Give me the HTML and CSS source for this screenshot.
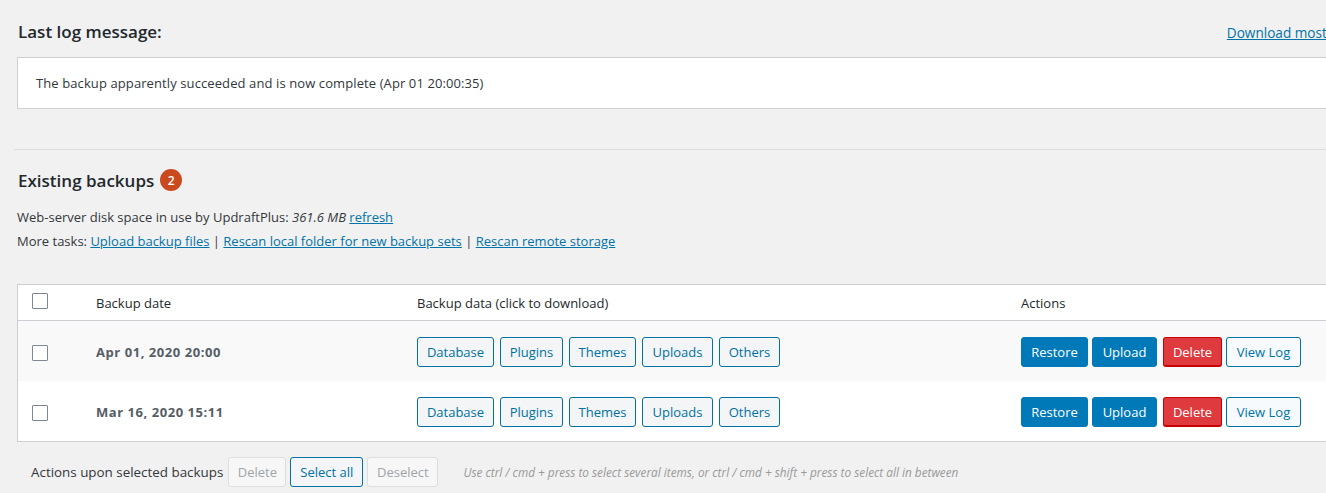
FILE: index.html
```html
<!DOCTYPE html>
<html>
<head>
<meta charset="utf-8">
<link rel="stylesheet" href="styles.css">
</head>
<body>
<div class="wrap">
  <div class="log-head">
    <h3 class="title">Last log message:</h3>
    <a class="link log-dl" href="#">Download most recent log file</a>
  </div>
  <div class="log-box">The backup apparently succeeded and is now complete (Apr 01 20:00:35)</div>
  <hr class="sep">
  <h3 class="title existing">Existing backups <span class="badge">2</span></h3>
  <p class="info first">Web-server disk space in use by UpdraftPlus: <em>361.6 MB</em> <a class="link" href="#">refresh</a></p>
  <p class="info">More tasks: <a class="link" href="#">Upload backup files</a> | <a class="link" href="#">Rescan local folder for new backup sets</a> | <a class="link" href="#">Rescan remote storage</a></p>

  <div class="table">
    <div class="row head">
      <div class="cell chk"><span class="box"></span></div>
      <div class="cell">Backup date</div>
      <div class="cell">Backup data (click to download)</div>
      <div class="cell">Actions</div>
    </div>
    <div class="row alt">
      <div class="cell chk"><span class="box"></span></div>
      <div class="cell date">Apr 01, 2020 20:00</div>
      <div class="cell data">
        <button class="btn w-db">Database</button><button class="btn w-pl">Plugins</button><button class="btn w-th">Themes</button><button class="btn w-up">Uploads</button><button class="btn w-ot">Others</button>
      </div>
      <div class="cell actions">
        <button class="btn primary w-re">Restore</button><button class="btn primary w-ul">Upload</button><button class="btn danger w-de">Delete</button><button class="btn light w-vl">View Log</button>
      </div>
    </div>
    <div class="row">
      <div class="cell chk"><span class="box"></span></div>
      <div class="cell date">Mar 16, 2020 15:11</div>
      <div class="cell data">
        <button class="btn w-db">Database</button><button class="btn w-pl">Plugins</button><button class="btn w-th">Themes</button><button class="btn w-up">Uploads</button><button class="btn w-ot">Others</button>
      </div>
      <div class="cell actions">
        <button class="btn primary w-re">Restore</button><button class="btn primary w-ul">Upload</button><button class="btn danger w-de">Delete</button><button class="btn light w-vl">View Log</button>
      </div>
    </div>
  </div>

  <div class="bulk">
    <span class="bulk-label">Actions upon selected backups</span>
    <button class="btn disabled w-bd">Delete</button>
    <button class="btn w-bs">Select all</button>
    <button class="btn disabled w-bx">Deselect</button>
    <span class="hint">Use ctrl / cmd + press to select several items, or ctrl / cmd + shift + press to select all in between</span>
  </div>
</div>
</body>
</html>
```

FILE: styles.css
```css
html, body {
  margin: 0;
  padding: 0;
}
body {
  background: #f1f1f1;
  color: #32373c;
  font-family: "Open Sans", "Noto Sans", sans-serif;
  font-size: 13px;
  overflow: hidden;
  width: 1326px;
  height: 493px;
}
.wrap {
  width: 1405px;
  padding: 0 0 0 17px;
}
.log-head {
  display: flex;
  justify-content: space-between;
  align-items: center;
  height: 57px;
  padding-top: 6px;
  box-sizing: border-box;
}
.title {
  margin: 0;
  font-size: 17px;
  font-weight: 600;
  color: #23282d;
  padding-left: 1px;
}
.log-dl {
  font-size: 13.6px;
  margin-top: 1px;
  margin-right: 6px;
}
.link {
  color: #0073aa;
  text-decoration: underline;
}
.log-box {
  background: #fff;
  border: 1px solid #ccd0d4;
  height: 50px;
  line-height: 50px;
  padding-left: 18px;
  font-size: 13px;
  letter-spacing: 0.1px;
}
.sep {
  border: 0;
  border-top: 1px solid #dcdcdc;
  margin: 40px 0 0 -3px;
  height: 0;
}
.existing {
  display: flex;
  align-items: center;
  margin-top: 18px;
  height: 24px;
}
.badge {
  display: inline-flex;
  align-items: center;
  justify-content: center;
  width: 22px;
  height: 22px;
  border-radius: 50%;
  background: #ca4a1f;
  color: #fff;
  font-size: 12px;
  font-weight: 600;
  margin-left: 6px;
}
.info {
  margin: 0;
  line-height: 24px;
  font-size: 13px;
}
.info.first {
  margin-top: 13px;
}
.table {
  margin-top: 31px;
  background: #fff;
  border: 1px solid #ccd0d4;
}
.row {
  display: grid;
  grid-template-columns: 68px 321px 604px 1fr;
  height: 60px;
  align-items: center;
  box-sizing: border-box;
  padding-top: 1px;
}
.row.head {
  height: 36px;
  padding-top: 0;
  border-bottom: 1px solid #ccd0d4;
  color: #23282d;
  font-size: 13px;
}
.row.alt {
  background: #f9f9f9;
}
.cell {
  padding-left: 10px;
  display: flex;
  align-items: center;
}
.cell.chk {
  padding-left: 14px;
}
.row .cell.chk .box {
  margin-top: 2px;
}
.row.head .cell.chk .box {
  margin-top: -3px;
}
.box {
  display: block;
  width: 14px;
  height: 14px;
  border: 1px solid #7e8993;
  background: #fff;
  border-radius: 1px;
}
.date {
  font-weight: 700;
  color: #555d66;
  font-size: 13px;
  letter-spacing: 0.55px;
}
.btn {
  font-family: inherit;
  font-size: 13px;
  height: 30px;
  line-height: 28px;
  padding: 0;
  border: 1px solid #0071a1;
  border-radius: 3px;
  background: #f3f5f6;
  color: #0071a1;
  margin: 0;
  box-sizing: border-box;
  text-align: center;
  white-space: nowrap;
}
.data .btn {
  margin-right: 6px;
}
.w-db { width: 77px; }
.w-pl { width: 63px; }
.w-th { width: 67px; }
.w-up { width: 71px; }
.w-ot { width: 61px; }
.w-re { width: 67px; margin-right: 4px; }
.w-ul { width: 65px; margin-right: 6px; }
.w-de { width: 59px; margin-right: 4px; }
.w-vl { width: 75px; }
.w-bd { width: 58px; }
.w-bs { width: 73px; }
.w-bx { width: 71px; }
.btn.primary {
  background: #0079b9;
  border-color: #0079b9;
  color: #fff;
}
.btn.danger {
  background: #df3a3e;
  border-color: #c80000;
  border-bottom-width: 2px;
  color: #fff;
  line-height: 28px;
}
.btn.light {
  background: #f6fafc;
  border-color: #0073aa;
  color: #0073aa;
}
.bulk {
  display: flex;
  align-items: center;
  gap: 4px;
  padding-left: 14px;
  margin-top: 15px;
}
.bulk-label {
  font-size: 13.4px;
  color: #32373c;
  margin-right: 1px;
}
.btn.disabled {
  background: #f7f7f7;
  border-color: #dddddd;
  color: #a0a5aa;
}
.hint {
  font-style: italic;
  font-size: 11.8px;
  color: #999;
  margin-left: 21px;
}
```
